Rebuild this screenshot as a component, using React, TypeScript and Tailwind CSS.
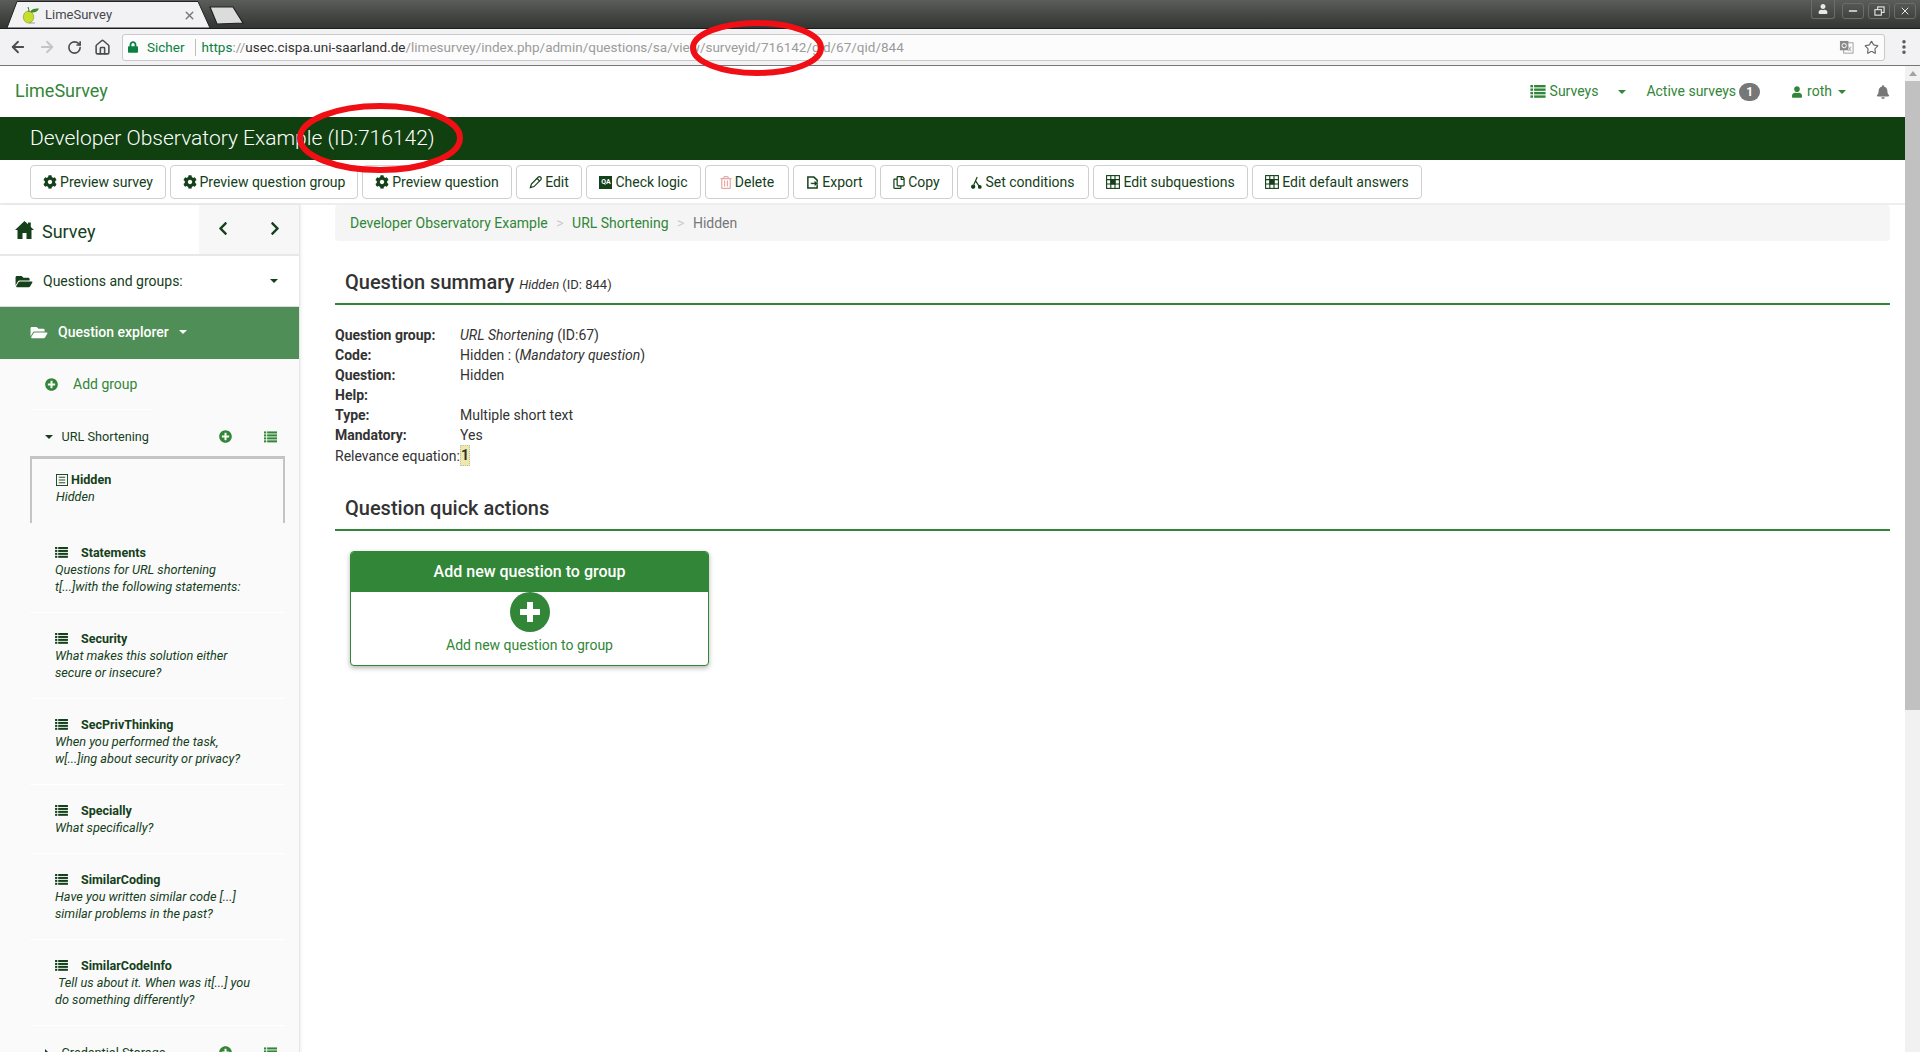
import { ArrowLeft, ArrowRight, EllipsisVertical, House, Minus, RotateCw, Star, X } from 'lucide-react';
import { FaBell, FaChevronLeft, FaChevronRight, FaCog, FaFolderOpen, FaLock, FaPlusCircle, FaRegCopy, FaRegTrashAlt, FaUser } from 'react-icons/fa';
import type { ReactNode } from 'react';

// ─── Small drawn icons ────────────────────────────────────────────────────────

function ListIcon({ className }: { className?: string }) {
	return (
		<svg viewBox="0 0 14 12" className={className} fill="currentColor" aria-hidden="true">
			<rect x="0" y="0" width="2.4" height="2.2" />
			<rect x="3.4" y="0" width="10.6" height="2.2" />
			<rect x="0" y="3.2" width="2.4" height="2.2" />
			<rect x="3.4" y="3.2" width="10.6" height="2.2" />
			<rect x="0" y="6.4" width="2.4" height="2.2" />
			<rect x="3.4" y="6.4" width="10.6" height="2.2" />
			<rect x="0" y="9.6" width="2.4" height="2.2" />
			<rect x="3.4" y="9.6" width="10.6" height="2.2" />
		</svg>
	);
}

function GridIcon() {
	return (
		<svg viewBox="0 0 14 14" className="w-[14px] h-[14px]" fill="none" stroke="currentColor" strokeWidth="1.1" aria-hidden="true">
			<rect x="0.6" y="0.6" width="12.8" height="12.8" />
			<path d="M0.6 4.6H13.4M0.6 9H13.4M4.8 0.6V13.4M9 0.6V13.4" />
			<rect x="5" y="5" width="4" height="4" fill="currentColor" />
		</svg>
	);
}

function ExportIcon() {
	return (
		<svg viewBox="0 0 14 14" className="w-[13px] h-[13px]" aria-hidden="true">
			<path d="M2 1.2H8.5L12 4.5V12.8H2Z" fill="none" stroke="currentColor" strokeWidth="1.6" />
			<path d="M5 7H9V4.8L13.4 8 9 11.2V9H5Z" fill="currentColor" stroke="#fff" strokeWidth="0.5" />
		</svg>
	);
}

function ConditionIcon() {
	return (
		<svg viewBox="0 0 12 14" className="w-[11px] h-[13px]" fill="none" stroke="currentColor" strokeWidth="1.3" aria-hidden="true">
			<path d="M6.8 1 3 9.5M5.2 5.5 9.5 12" />
			<circle cx="2.4" cy="11.6" r="1.7" fill="currentColor" />
			<circle cx="9.6" cy="11.8" r="1.4" fill="currentColor" />
		</svg>
	);
}

function PencilIcon() {
	return (
		<svg viewBox="0 0 14 14" className="w-[13px] h-[13px]" fill="none" stroke="currentColor" strokeWidth="1.3" aria-hidden="true">
			<path d="M1.5 12.5 2.6 8.6 9.8 1.4A1.4 1.4 0 0 1 12.6 4.2L5.4 11.4Z" />
			<path d="M8.6 2.6 11.4 5.4" />
		</svg>
	);
}

function HomeIcon() {
	return (
		<svg viewBox="0 0 19 18" className="w-[19px] h-[18px]" fill="currentColor" aria-hidden="true">
			<path d="M9.5 0 0 9H2.5V18H7.5V12H11.5V18H16.5V9H19L15.8 6V1.5H13V3.3Z" />
		</svg>
	);
}

function LimeIcon() {
	return (
		<svg viewBox="0 0 18 18" className="w-[18px] h-[18px] shrink-0" aria-hidden="true">
			<ellipse cx="6.5" cy="11" rx="5.2" ry="6" fill="#c6de2e" stroke="#8aa51d" strokeWidth="0.7" />
			<path d="M8 6C9.5 3 13 2 17 2.5 15.5 6 12 7.5 8 6Z" fill="#3c8c2c" />
			<path d="M7 6C7 4 6.5 2.5 6 1" stroke="#3c6c2c" strokeWidth="1" fill="none" />
			<path d="M7 17H13" stroke="#888" strokeWidth="0.8" />
		</svg>
	);
}

function TranslateIcon() {
	return (
		<svg viewBox="0 0 16 16" className="w-[15px] h-[15px]" aria-hidden="true">
			<rect x="5" y="3" width="10" height="11" fill="#fff" stroke="#9a9a9a" />
			<rect x="1" y="1" width="9" height="10" fill="#8a8a8a" />
			<circle cx="5.5" cy="6" r="2.3" fill="none" stroke="#fff" strokeWidth="1" />
			<path d="M10 7 13 12M13 7 10 12" stroke="#9a9a9a" strokeWidth="0.9" />
		</svg>
	);
}

function Caret({ className }: { className?: string }) {
	return <span className={`inline-block w-0 h-0 border-x-[4px] border-x-transparent border-t-[4px] border-t-current ${className ?? ''}`} />;
}

// ─── Browser chrome ───────────────────────────────────────────────────────────

function WindowButton({ children }: { children: ReactNode }) {
	return (
		<div className="w-[22px] h-[16px] rounded-[3px] border border-[#6a6d6a] flex items-center justify-center text-[#e8e8e8]">
			{children}
		</div>
	);
}

function BrowserChrome() {
	return (
		<>
			<div className="h-[29px] border-b border-[#1c1c1c] bg-gradient-to-b from-[#5a5d5a] to-[#333533] flex items-end pl-[7px]">
				<div className="relative w-[204px] h-[27px] shrink-0">
					<svg viewBox="0 0 204 27" className="absolute inset-0 w-full h-full" aria-hidden="true">
						<path d="M0 27 10 0.5H191L203 27Z" fill="#f2f2f4" stroke="#222" strokeWidth="1" />
					</svg>
					<div className="relative h-full flex items-center pl-[15px] pr-[15px] text-[#45484c] text-[13px] pt-[1px]">
						<LimeIcon />
						<span className="ml-[5px]">LimeSurvey</span>
						<X className="w-[13px] h-[13px] ml-auto text-[#777]" strokeWidth={2.5} />
					</div>
				</div>
				<svg viewBox="0 0 36 19" className="w-9 h-[19px] mb-[3px] -ml-[2px] shrink-0" aria-hidden="true">
					<path d="M1 1H24L34 17 8 18Z" fill="#dcdcdc" stroke="#222" strokeWidth="1.2" />
				</svg>
				<div className="ml-auto self-start flex items-start pr-[4px]">
					<div className="w-[24px] h-[19px] rounded-b-[3px] border border-t-0 border-[#6a6d6a] flex items-center justify-center text-[#e8e8e8] mr-[7px]">
						<FaUser className="w-[10px] h-[10px]" />
					</div>
					<div className="flex gap-[4px] pt-[3px]">
						<WindowButton><Minus className="w-3 h-3" strokeWidth={3} /></WindowButton>
						<WindowButton>
							<svg viewBox="0 0 12 12" className="w-[11px] h-[11px]" fill="none" stroke="currentColor" strokeWidth="1.2" aria-hidden="true">
								<rect x="4" y="1" width="7" height="6" />
								<rect x="1" y="4" width="7" height="6" fill="#454745" />
							</svg>
						</WindowButton>
						<WindowButton><X className="w-3 h-3" strokeWidth={2} /></WindowButton>
					</div>
				</div>
			</div>
			<div className="h-[37px] border-b border-[#777] bg-[#f2f2f4] flex items-center pl-[9px] text-[#4a4d50]">
				<ArrowLeft className="w-[18px] h-[18px]" strokeWidth={2.4} />
				<ArrowRight className="w-[18px] h-[18px] ml-[11px] text-[#c4c4c6]" strokeWidth={2.4} />
				<RotateCw className="w-[15px] h-[15px] ml-[11px]" strokeWidth={2.6} />
				<House className="w-[17px] h-[17px] ml-[12px]" strokeWidth={2.2} />
				<div className="ml-[11px] w-[1763px] h-[27px] rounded-[3px] border border-[#c9c9c9] bg-[#fcfcfc] flex items-center pl-[5px] pr-[5px] text-[13.5px]">
					<FaLock className="w-[10px] h-[12px] text-[#0b8043]" />
					<span className="ml-[9px] text-[#0b8043]">Sicher</span>
					<span className="ml-[10px] w-px h-[17px] bg-[#bdbdbd]" />
					<span className="ml-[6px] text-[#0b8043]">https</span>
					<span className="text-[#9b9b9b]">://</span>
					<span className="text-[#333]">usec.cispa.uni-saarland.de</span>
					<span className="text-[#9b9b9b]">/limesurvey/index.php/admin/questions/sa/view/surveyid/716142/gid/67/qid/844</span>
					<div className="ml-auto flex items-center gap-[10px] text-[#666]">
						<TranslateIcon />
						<Star className="w-[15px] h-[15px]" strokeWidth={1.8} />
					</div>
				</div>
				<EllipsisVertical className="w-[18px] h-[18px] ml-[10px] text-[#555]" strokeWidth={2.6} />
			</div>
		</>
	);
}

// ─── Action bar ───────────────────────────────────────────────────────────────

const cog = <FaCog className="w-[14px] h-[14px]" />;

const ACTIONS: { label: string; width: string; icon: ReactNode }[] = [
	{ label: 'Preview survey', width: 'w-[136px]', icon: cog },
	{ label: 'Preview question group', width: 'w-[188px]', icon: cog },
	{ label: 'Preview question', width: 'w-[150px]', icon: cog },
	{ label: 'Edit', width: 'w-[66px]', icon: <PencilIcon /> },
	{
		label: 'Check logic',
		width: 'w-[115px]',
		icon: <span className="w-[13px] h-[13px] bg-[#14401a] text-white text-[7px] font-bold leading-[13px] text-center">QA</span>,
	},
	{ label: 'Delete', width: 'w-[84px]', icon: <FaRegTrashAlt className="w-[12px] h-[13px] text-[#e6a9a4]" /> },
	{ label: 'Export', width: 'w-[83px]', icon: <ExportIcon /> },
	{ label: 'Copy', width: 'w-[73px]', icon: <FaRegCopy className="w-[12px] h-[13px]" /> },
	{ label: 'Set conditions', width: 'w-[132px]', icon: <ConditionIcon /> },
	{ label: 'Edit subquestions', width: 'w-[155px]', icon: <GridIcon /> },
	{ label: 'Edit default answers', width: 'w-[170px]', icon: <GridIcon /> },
];

function ActionBar() {
	return (
		<div className="h-[45px] border-b-2 border-[#eeeeee] pl-[30px] pt-[5px] flex gap-[4px]">
			{ACTIONS.map((a) => (
				<button
					key={a.label}
					type="button"
					className={`${a.width} h-[34px] rounded-[4px] border border-[#cfcfcf] bg-white text-[14px] text-[#14401a] flex items-center justify-center gap-[3px]`}
				>
					{a.icon}
					{a.label}
				</button>
			))}
		</div>
	);
}

// ─── Sidebar ──────────────────────────────────────────────────────────────────

const QUESTIONS = [
	{ code: 'Statements', lines: ['Questions for URL shortening', 't[...]with the following statements:'] },
	{ code: 'Security', lines: ['What makes this solution either', 'secure or insecure?'] },
	{ code: 'SecPrivThinking', lines: ['When you performed the task,', 'w[...]ing about security or privacy?'] },
	{ code: 'Specially', lines: ['What specifically?'] },
	{ code: 'SimilarCoding', lines: ['Have you written similar code [...]', 'similar problems in the past?'] },
	{ code: 'SimilarCodeInfo', lines: ['\u00a0Tell us about it. When was it[...] you', 'do something differently?'] },
];

function GroupRow({ name, collapsed }: { name: string; collapsed?: boolean }) {
	return (
		<div className="h-[46px] pt-[18px] pl-[45px] pr-[22px] flex items-start text-[12.7px] leading-[18px] text-[#14401a]">
			<div className="h-[18px] flex items-center w-[16.5px]">
				{collapsed ? (
					<span className="w-0 h-0 border-y-[4px] border-y-transparent border-l-[4px] border-l-current" />
				) : (
					<Caret />
				)}
			</div>
			<span>{name}</span>
			<FaPlusCircle className="ml-auto w-[13px] h-[13px] mt-[2px] text-[#328637]" />
			<ListIcon className="ml-[32px] w-[13px] h-[12px] mt-[3px] text-[#328637]" />
		</div>
	);
}

function Sidebar() {
	return (
		<aside className="relative z-10 w-[300px] shrink-0 h-full overflow-hidden bg-[#fafafa] border-r border-[#e6e6e6] shadow-[1px_0_3px_rgba(0,0,0,0.08)] text-[#14401a]">
			<div className="h-[51px] border-b-2 border-[#e8e8e8] bg-white flex">
				<div className="w-[199px] flex items-center pl-[15px]">
					<HomeIcon />
					<span className="ml-[8px] text-[18px] pt-[3px]">Survey</span>
				</div>
				<div className="flex-1 bg-[#f7f7f7] flex items-center pb-[2px] pl-[18px]">
					<FaChevronLeft className="w-[12px] h-[15px]" />
					<FaChevronRight className="w-[12px] h-[15px] ml-[40px]" />
				</div>
			</div>
			<div className="h-[51px] border-b border-[#dddddd] bg-white flex items-center pl-[15px] pr-[21px] text-[14px]">
				<FaFolderOpen className="w-[18px] h-[15px]" />
				<span className="ml-[10px]">Questions and groups:</span>
				<Caret className="ml-auto" />
			</div>
			<div className="h-[52px] bg-[#4f8e56] flex items-center pb-[2px] pl-[30px] text-[14px] font-medium text-white">
				<FaFolderOpen className="w-[18px] h-[15px]" />
				<span className="ml-[10px]">Question explorer</span>
				<Caret className="ml-[10px]" />
			</div>
			<div className="h-[50px] flex items-center pl-[45px] text-[14px] text-[#328637]">
				<FaPlusCircle className="w-[13px] h-[13px]" />
				<span className="ml-[15px]">Add group</span>
			</div>
			<div className="ml-[30px] w-[122px] h-px bg-white" />
			<GroupRow name="URL Shortening" />
			<div className="ml-[30px] w-[255px] h-[67px] border-x-2 border-t-[3px] border-[#c4c4c4] pl-[24px] pt-[12px] text-[12.6px] leading-[17px]">
				<div className="flex items-center font-bold">
					<svg viewBox="0 0 13 13" className="w-[12px] h-[12px] mr-[3px]" fill="none" stroke="currentColor" aria-hidden="true">
						<rect x="0.5" y="0.5" width="12" height="12" />
						<path d="M3 3.5H10M3 6.5H10M3 9.5H10" />
					</svg>
					Hidden
				</div>
				<div className="italic">Hidden</div>
			</div>
			<div className="h-[4px]" />
			{QUESTIONS.map((q) => (
				<div key={q.code} className="ml-[30px] w-[255px] border-b border-white pl-[25px] pt-[17px] pb-[17px] leading-[17px]">
					<div className="flex items-center font-bold text-[12.5px]">
						<ListIcon className="w-[13px] h-[11px] mr-[13px]" />
						{q.code}
					</div>
					{q.lines.map((line) => (
						<div key={line} className="italic whitespace-pre text-[12.7px]">{line}</div>
					))}
				</div>
			))}
			<GroupRow name="Credential Storage" collapsed />
		</aside>
	);
}

// ─── Content ──────────────────────────────────────────────────────────────────

const SUMMARY: { label: string; value: ReactNode }[] = [
	{ label: 'Question group:', value: <><em>URL Shortening</em> (ID:67)</> },
	{ label: 'Code:', value: <>Hidden : (<em>Mandatory question</em>)</> },
	{ label: 'Question:', value: 'Hidden' },
	{ label: 'Help:', value: '' },
	{ label: 'Type:', value: 'Multiple short text' },
	{ label: 'Mandatory:', value: 'Yes' },
];

function SectionTitle({ children }: { children: ReactNode }) {
	return (
		<div className="h-[37px] pl-[10px] border-b-2 border-[#328637] text-[20px] font-medium leading-[29px] text-[#333]">
			{children}
		</div>
	);
}

function Content() {
	return (
		<main className="flex-1 min-w-0 pl-[35px] pr-[15px] text-[14px] text-[#333]">
			<div className="h-[36px] rounded-[4px] bg-[#f5f5f5] flex items-center pl-[15px]">
				<span className="text-[#328637]">Developer Observatory Example</span>
				<span className="mx-[8.5px] text-[#ccc]">&gt;</span>
				<span className="text-[#328637]">URL Shortening</span>
				<span className="mx-[8.5px] text-[#ccc]">&gt;</span>
				<span className="text-[#777]">Hidden</span>
			</div>
			<div className="mt-[27px]">
				<SectionTitle>
					Question summary{' '}
					<small className="text-[13px] font-normal"><em>Hidden</em> (ID: 844)</small>
				</SectionTitle>
			</div>
			<div className="mt-[20px] leading-[20px]">
				{SUMMARY.map((row) => (
					<div key={row.label} className="flex h-[20px]">
						<span className="w-[125px] font-bold">{row.label}</span>
						<span>{row.value}</span>
					</div>
				))}
				<div className="flex h-[21px] items-center">
					<span className="w-[125px]">Relevance equation:</span>
					<span className="h-[21px] w-[10px] text-center font-bold bg-[#efe9a9] border border-dotted border-[#bbb] leading-[19px]">1</span>
				</div>
			</div>
			<div className="mt-[28px]">
				<SectionTitle>Question quick actions</SectionTitle>
			</div>
			<div className="mt-[20px] ml-[15px] w-[359px] h-[115px] rounded-[4px] border border-[#328637] bg-white shadow-[0_2px_5px_rgba(0,0,0,0.3)] overflow-hidden flex flex-col items-center">
				<div className="w-full h-[40px] shrink-0 bg-[#328637] text-white text-[16px] font-medium flex items-center justify-center">
					Add new question to group
				</div>
				<div className="w-[40px] h-[40px] shrink-0 rounded-full bg-[#328637] flex items-center justify-center">
					<div className="relative w-[20px] h-[20px]">
						<div className="absolute left-[7px] top-0 w-[6px] h-[20px] bg-white" />
						<div className="absolute left-0 top-[7px] w-[20px] h-[6px] bg-white" />
					</div>
				</div>
				<div className="mt-[3px] text-[#328637]">Add new question to group</div>
			</div>
		</main>
	);
}

// ─── Page ─────────────────────────────────────────────────────────────────────

export default function App() {
	return (
		<div className="relative w-[1920px] h-[1052px] overflow-hidden bg-white flex flex-col font-['Roboto',sans-serif]">
			<BrowserChrome />
			<div className="flex-1 min-h-0 flex">
				<div className="flex-1 min-w-0 flex flex-col">
					<header className="h-[51px] shrink-0 flex items-center pl-[15px] text-[14px] text-[#328637]">
						<span className="text-[18px] pb-[2px]">LimeSurvey</span>
						<ListIcon className="ml-auto w-[16px] h-[13px]" />
						<span className="ml-[4px]">Surveys</span>
						<Caret className="ml-[20px]" />
						<span className="ml-[20px]">Active surveys</span>
						<span className="ml-[3px] w-[21px] h-[18px] rounded-full bg-[#777] text-white text-[12px] font-bold text-center leading-[18px]">1</span>
						<FaUser className="ml-[32px] w-[10px] h-[12px]" />
						<span className="ml-[5px]">roth</span>
						<Caret className="ml-[6px]" />
						<FaBell className="ml-[30px] mr-[15px] w-[14px] h-[14px] text-[#777]" />
					</header>
					<div className="h-[43px] shrink-0 bg-[#10400f] flex items-center pl-[30px] text-[21px] font-light text-white">
						Developer Observatory Example (ID:716142)
					</div>
					<ActionBar />
					<div className="flex-1 min-h-0 flex">
						<Sidebar />
						<Content />
					</div>
				</div>
				<div className="w-[15px] shrink-0 bg-[#f1f1f1] flex flex-col items-center">
					<span className="mt-[5px] w-0 h-0 border-x-[4px] border-x-transparent border-b-[5px] border-b-[#a3a3a3]" />
					<div className="mt-[5px] w-full h-[629px] bg-[#c1c1c1]" />
				</div>
			</div>
			{/* Red annotation rings drawn over the screenshot */}
			<svg viewBox="0 0 1920 1052" className="absolute inset-0 w-[1920px] h-[1052px] pointer-events-none" fill="none" stroke="#ef0f14" strokeWidth="6" aria-hidden="true">
				<ellipse cx="757" cy="48" rx="64" ry="25" />
				<ellipse cx="380" cy="138" rx="80" ry="32" />
			</svg>
		</div>
	);
}
